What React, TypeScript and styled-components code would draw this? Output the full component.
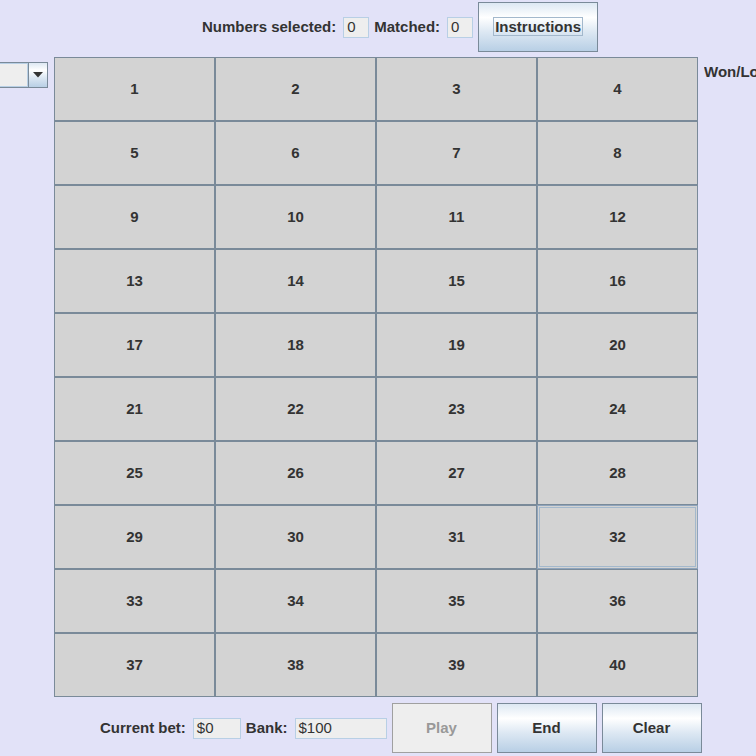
import React from "react";
import styled, { createGlobalStyle } from "styled-components";

const GlobalStyle = createGlobalStyle`
  html, body {
    margin: 0;
    padding: 0;
    background: #e2e2f8;
  }
`;

const FONT = `"Liberation Sans", Arial, sans-serif`;

const Frame = styled.div`
  width: 756px;
  height: 756px;
  overflow: hidden;
  background: #e2e2f8;
  display: flex;
  flex-direction: column;
  font-family: ${FONT};
  color: #333333;
`;

const BarRow = styled.div<{ $indent: number; $top: number; $bottom: number }>`
  display: flex;
  align-items: center;
  gap: 5px;
  height: 50px;
  flex: none;
  padding-left: ${(p) => p.$indent}px;
  margin-top: ${(p) => p.$top}px;
  margin-bottom: ${(p) => p.$bottom}px;
`;

const Label = styled.span`
  font: bold 15px ${FONT};
  color: #333333;
  padding-right: 2px;
  margin-bottom: 2px;
  white-space: nowrap;
`;

const Field = styled.div<{ $width: number }>`
  box-sizing: border-box;
  width: ${(p) => p.$width}px;
  height: 21px;
  background: #eeeeee;
  border: 1px solid #b8cfe5;
  padding: 0 0 2px 3px;
  display: flex;
  align-items: center;
  font: 15px ${FONT};
  color: #333333;
`;

const Button = styled.button<{ $width: number }>`
  box-sizing: border-box;
  width: ${(p) => p.$width}px;
  height: 50px;
  margin: 0;
  padding: 0 0 2px 0;
  border: 1px solid #7a8a99;
  background: linear-gradient(
    to bottom,
    #dde8f3 0%,
    #ffffff 30%,
    #dde8f3 60%,
    #b8cfe5 100%
  );
  font: bold 15px ${FONT};
  color: #333333;
  display: flex;
  align-items: center;
  justify-content: center;

  &:disabled {
    background: #eeeeee;
    border-color: #a0a0a0;
    color: #999999;
  }
`;

const FocusRing = styled.span`
  border: 1px solid #a3b8cc;
  line-height: 17px;
  padding: 0 1px;
`;

const Middle = styled.div`
  display: flex;
  gap: 6px;
  height: 640px;
  flex: none;
`;

const West = styled.div`
  width: 48px;
  flex: none;
  display: flex;
  justify-content: flex-end;
  align-items: flex-start;
  padding-top: 5px;
  overflow: hidden;
`;

const Combo = styled.div`
  flex: none;
  display: flex;
  height: 26px;
  box-sizing: border-box;
  border: 1px solid #7a8a99;
`;

const ComboField = styled.div`
  width: 70px;
  box-sizing: border-box;
  background: #eeeeee;
  border: 1px solid #b8cfe5;
`;

const ComboArrow = styled.div`
  width: 19px;
  box-sizing: border-box;
  border-left: 1px solid #7a8a99;
  background: linear-gradient(
    to bottom,
    #dde8f3 0%,
    #ffffff 30%,
    #dde8f3 60%,
    #b8cfe5 100%
  );
  display: flex;
  align-items: center;
  justify-content: center;
`;

const Grid = styled.div`
  width: 644px;
  flex: none;
  display: grid;
  grid-template-columns: repeat(4, 161px);
  grid-template-rows: repeat(10, 64px);
`;

const Cell = styled.button<{ $focused?: boolean }>`
  box-sizing: border-box;
  margin: 0;
  padding: 0 0 2px 0;
  border: 1px solid ${(p) => (p.$focused ? "#8ea4bc" : "#7a8a99")};
  background: #d3d3d3;
  font: bold 15px ${FONT};
  color: #333333;
  box-shadow: ${(p) =>
    p.$focused ? "inset 0 0 0 1px #d3d3d3, inset 0 0 0 2px #a3b8cc" : "none"};
`;

const East = styled.div`
  flex: 1;
  overflow: hidden;
  white-space: nowrap;
  padding-top: 6px;
  font: bold 15px ${FONT};
  line-height: 18px;
  color: #333333;
`;

const numbers = Array.from({ length: 40 }, (_, i) => i + 1);

const App = () => {
  return (
    <Frame>
      <GlobalStyle />
      <BarRow $indent={202} $top={2} $bottom={5}>
        <Label>Numbers selected:</Label>
        <Field $width={26}>0</Field>
        <Label>Matched:</Label>
        <Field $width={26}>0</Field>
        <Button $width={120}>
          <FocusRing>Instructions</FocusRing>
        </Button>
      </BarRow>
      <Middle>
        <West>
          <Combo>
            <ComboField />
            <ComboArrow>
              <svg width="10" height="6" viewBox="0 0 10 6">
                <path d="M0 0 H10 L5 5.5 Z" fill="#333333" />
              </svg>
            </ComboArrow>
          </Combo>
        </West>
        <Grid>
          {numbers.map((n) => (
            <Cell key={n} $focused={n === 32}>
              {n}
            </Cell>
          ))}
        </Grid>
        <East>Won/Lost</East>
      </Middle>
      <BarRow $indent={100} $top={6} $bottom={0}>
        <Label>Current bet:</Label>
        <Field $width={48}>$0</Field>
        <Label>Bank:</Label>
        <Field $width={92}>$100</Field>
        <Button $width={100} disabled>
          Play
        </Button>
        <Button $width={100}>End</Button>
        <Button $width={100}>Clear</Button>
      </BarRow>
    </Frame>
  );
};

export default App;
